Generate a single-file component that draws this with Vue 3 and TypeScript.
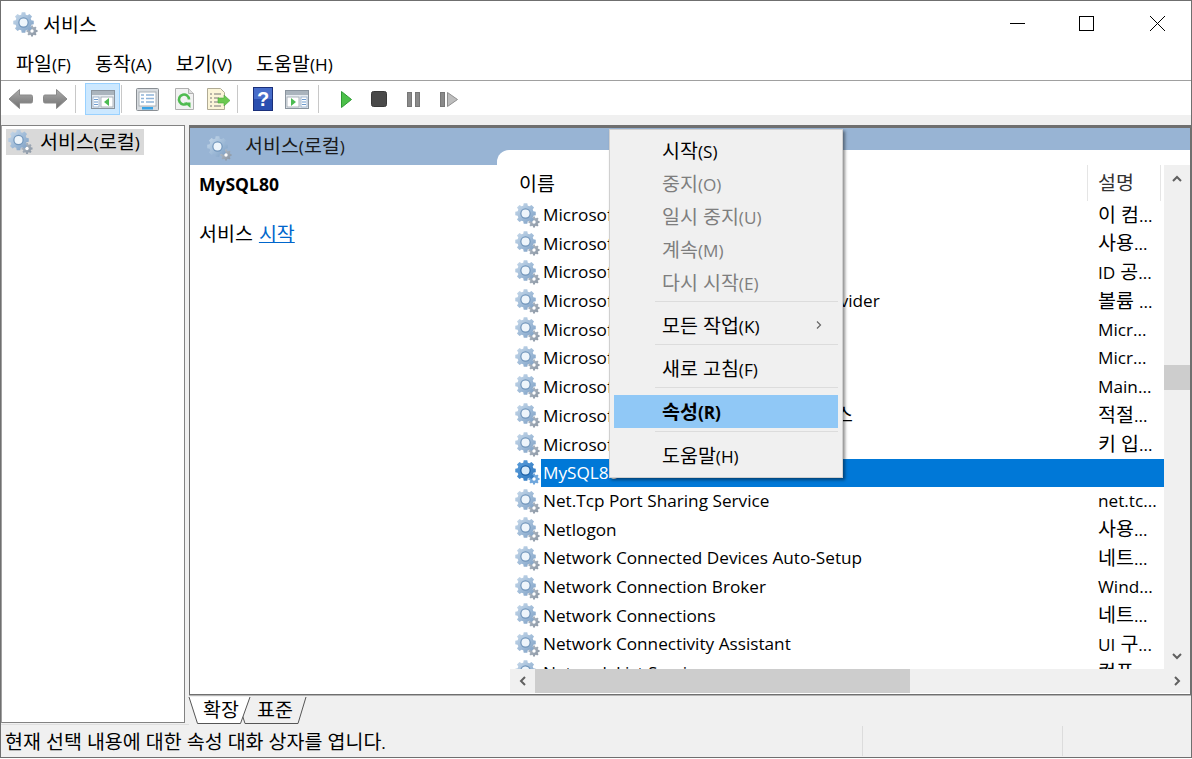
<script setup lang="ts">
import { h } from 'vue'

function gear(cx: number, cy: number, ro: number, ri: number, teeth: number): string {
  const pts: string[] = []
  const step = (Math.PI * 2) / teeth
  for (let i = 0; i < teeth; i++) {
    const a = i * step - Math.PI / 2
    const list: [number, number][] = [
      [ri, a - step * 0.36],
      [ro, a - step * 0.22],
      [ro, a + step * 0.22],
      [ri, a + step * 0.36],
    ]
    for (const [r, t] of list) {
      pts.push(`${(cx + r * Math.cos(t)).toFixed(2)} ${(cy + r * Math.sin(t)).toFixed(2)}`)
    }
  }
  return 'M' + pts.join('L') + 'Z'
}

const bigGear = gear(10.5, 10.5, 10.4, 8.2, 8)
const smallGear = gear(19, 19, 5.6, 4.2, 8)

// Hangul runs are set slightly larger than Latin runs, as the original UI font does.
const T = (props: { t: string }) =>
  h(
    'span',
    props.t
      .split(/([\uAC00-\uD7A3 ]+)/)
      .filter((s) => s.length > 0)
      .map((s) => (/[\uAC00-\uD7A3]/.test(s) ? h('span', { class: 'k' }, s) : s)),
  )
T.props = ['t']

interface Row {
  name: string
  desc: string
  selected?: boolean
}

const rows: Row[] = [
  { name: 'Microsoft Account Sign-in Assistant', desc: '이 컴...' },
  { name: 'Microsoft App-V Client', desc: '사용...' },
  { name: 'Microsoft Defender Antivirus', desc: 'ID 공...' },
  { name: 'Microsoft Software Shadow Copy Provider', desc: '볼륨 ...' },
  { name: 'Microsoft Storage Spaces', desc: 'Micr...' },
  { name: 'Microsoft Store Install', desc: 'Micr...' },
  { name: 'Microsoft Update Health', desc: 'Main...' },
  { name: 'Microsoft Windows SMS 라우터 서비스', desc: '적절...' },
  { name: 'Microsoft 키 입력', desc: '키 입...' },
  { name: 'MySQL80', desc: '', selected: true },
  { name: 'Net.Tcp Port Sharing Service', desc: 'net.tc...' },
  { name: 'Netlogon', desc: '사용...' },
  { name: 'Network Connected Devices Auto-Setup', desc: '네트...' },
  { name: 'Network Connection Broker', desc: 'Wind...' },
  { name: 'Network Connections', desc: '네트...' },
  { name: 'Network Connectivity Assistant', desc: 'UI 구...' },
  { name: 'Network List Service', desc: '컴퓨...' },
]

const menus = ['파일(F)', '동작(A)', '보기(V)', '도움말(H)']
</script>

<template>
  <div class="window">
    <svg class="defs" width="0" height="0" aria-hidden="true">
      <defs>
        <linearGradient id="gearBlue" x1="0" y1="0" x2="1" y2="1">
          <stop offset="0" stop-color="#cbdcec" />
          <stop offset="0.6" stop-color="#9ab7d5" />
          <stop offset="1" stop-color="#7b9cc0" />
        </linearGradient>
        <linearGradient id="gearSel" x1="0" y1="0" x2="1" y2="1">
          <stop offset="0" stop-color="#5c9fdc" />
          <stop offset="1" stop-color="#2a74bd" />
        </linearGradient>
        <linearGradient id="gearGrey" x1="0" y1="0" x2="1" y2="1">
          <stop offset="0" stop-color="#b4bec9" />
          <stop offset="1" stop-color="#8692a0" />
        </linearGradient>
        <linearGradient id="arrowG" x1="0" y1="0" x2="0" y2="1">
          <stop offset="0" stop-color="#adadad" />
          <stop offset="1" stop-color="#6f6f6f" />
        </linearGradient>
        <symbol id="gear" viewBox="0 0 25 25">
          <path :d="smallGear" fill="url(#gearGrey)" />
          <circle cx="19" cy="19" r="1.700" fill="#fff" />
          <path :d="bigGear" fill="url(#gearBlue)" />
          <circle cx="10.500" cy="10.500" r="5.200" fill="#7397bc" />
          <circle cx="10.500" cy="10.500" r="4" fill="#eef5fb" />
        </symbol>
        <symbol id="gearS" viewBox="0 0 25 25">
          <path :d="smallGear" fill="#6ea6dc" />
          <circle cx="19" cy="19" r="1.700" fill="#fff" />
          <path :d="bigGear" fill="url(#gearSel)" />
          <circle cx="10.500" cy="10.500" r="5.200" fill="#1a60a8" />
          <circle cx="10.500" cy="10.500" r="4" fill="#d6e9f9" />
        </symbol>
      </defs>
    </svg>

    <header class="titlebar">
      <svg class="title-icon"><use href="#gear" /></svg>
      <span class="title-text"><T t="서비스" /></span>
      <div class="caption">
        <svg width="46" height="46" viewBox="0 0 46 46"><path d="M17 22.500h15" stroke="#000" fill="none" /></svg>
        <svg width="46" height="46" viewBox="0 0 46 46"><rect x="15.500" y="15.500" width="14" height="14" stroke="#000" fill="none" /></svg>
        <svg width="46" height="46" viewBox="0 0 46 46"><path d="M15 15l15 15M30 15 15 30" stroke="#000" fill="none" /></svg>
      </div>
    </header>

    <nav class="menubar">
      <span v-for="m in menus" :key="m" class="menu-item"><T :t="m" /></span>
    </nav>

    <div class="toolbar">
      <svg class="tb w25" viewBox="0 0 25 24"><path d="M1 12 11.500 2.500v5.500h11.500a1.500 1.500 0 0 1 1.500 1.500v5a1.500 1.500 0 0 1-1.500 1.500H11.500v5.500z" fill="url(#arrowG)" stroke="#8a8a8a" /></svg>
      <svg class="tb w25 ml10" viewBox="0 0 25 24"><path d="M24 12 13.500 2.500v5.500H2a1.500 1.500 0 0 0-1.500 1.500v5A1.500 1.500 0 0 0 2 16h11.500v5.500z" fill="url(#arrowG)" stroke="#8a8a8a" /></svg>
      <i class="sep s1"></i>
      <div class="active">
        <svg width="24" height="19" viewBox="0 0 24 19"><rect x=".5" y=".5" width="23" height="18" fill="#e6ebf0" stroke="#8a949e" /><rect x="1" y="1" width="22" height="4" fill="#aab4bd" /><rect x="2" y="7" width="6" height="10" fill="#fff" stroke="#8fa9c6" stroke-width=".8" /><path d="M3 9.500h4M3 12h4M3 14.500h4" stroke="#6d9bcf" /><rect x="10" y="7" width="12" height="10" fill="#fff" stroke="#9aa4ad" stroke-width=".8" /><path d="M18 8v8l-5-4z" fill="#4cbb52" /></svg>
      </div>
      <i class="sep s2"></i>
      <svg class="tb ic1" width="23" height="23" viewBox="0 0 23 23"><rect x=".5" y=".5" width="22" height="22" rx="1" fill="#d8dce0" stroke="#8a8f94" /><rect x="3" y="4" width="17" height="14" fill="#fff" stroke="#a8afb6" /><path d="M5 7h3M10 7h8M5 10.500h3M10 10.500h8M5 14h3M10 14h8" stroke="#8fb4d9" stroke-width="1.400" /><rect x="6" y="19" width="11" height="2.500" fill="#39a4e8" /></svg>
      <svg class="tb ic2" width="21" height="24" viewBox="0 0 21 24"><path d="M1.500 1.500h13l5 5v16h-18z" fill="#f2f2f2" stroke="#b0b0b0" /><path d="M14.500 1.500v5h5" fill="#dedede" stroke="#b0b0b0" /><path d="M15 12.500a5 5 0 1 0-1.600 3.700" fill="none" stroke="#4fbb50" stroke-width="2.600" /><path d="M10 15.500h6.500V21z" fill="#4fbb50" /></svg>
      <svg class="tb ic3" width="25" height="24" viewBox="0 0 25 24"><path d="M1.500 1.500h13l4 4v17h-17z" fill="#fbf5d8" stroke="#b0ab95" /><path d="M4 7h2M8 7h7M4 11h2M8 11h5M4 15h2M8 15h5M4 19h2M8 19h7" stroke="#777" /><path d="M12 11h6V8l6 5.500L18 19v-3h-6z" fill="#6cc950" stroke="#49a83e" stroke-width=".6" /></svg>
      <i class="sep s3"></i>
      <svg class="tb ic4" width="20" height="24" viewBox="0 0 20 24"><rect x=".5" y=".5" width="19" height="23" fill="#2a4fb0" stroke="#1a2f7a" /><rect x="1" y="1" width="18" height="11" fill="#5b82dc" opacity=".6" /><text x="10" y="19" text-anchor="middle" class="q">?</text></svg>
      <svg class="tb ic5" width="24" height="19" viewBox="0 0 24 19"><rect x=".5" y=".5" width="23" height="18" fill="#e6ebf0" stroke="#8a949e" /><rect x="1" y="1" width="22" height="4" fill="#aab4bd" /><rect x="2" y="7" width="12" height="10" fill="#fff" stroke="#9aa4ad" stroke-width=".8" /><path d="M6 8v8l5-4z" fill="#4cbb52" /><rect x="16" y="7" width="6" height="10" fill="#fff" stroke="#8fa9c6" stroke-width=".8" /><path d="M17 9.500h4M17 12h4M17 14.500h4" stroke="#6d9bcf" /></svg>
      <i class="sep s4"></i>
      <svg class="tb ic6" width="11" height="17" viewBox="0 0 11 17"><path d="M.5.500 10.500 8.500.5 16.500z" fill="#4cc04a" stroke="#2f9a34" /></svg>
      <svg class="tb ic7" width="16" height="16" viewBox="0 0 16 16"><rect x=".5" y=".5" width="15" height="15" rx="2" fill="#4a4a4a" stroke="#3a3a3a" /></svg>
      <svg class="tb ic8" width="13" height="15" viewBox="0 0 13 15"><rect x=".5" y=".5" width="4" height="14" fill="#8a8a8a" stroke="#777" /><rect x="8.500" y=".5" width="4" height="14" fill="#8a8a8a" stroke="#777" /></svg>
      <svg class="tb ic9" width="18" height="15" viewBox="0 0 18 15"><rect x=".5" y=".5" width="4" height="14" fill="#8a8a8a" stroke="#777" /><path d="M7.500.5l10 7-10 7z" fill="#bdbdbd" stroke="#8f8f8f" /></svg>
    </div>

    <main class="workspace">
      <aside class="tree">
        <div class="tree-node">
          <svg class="tree-icon"><use href="#gear" /></svg>
          <span class="tree-label"><T t="서비스(로컬)" /></span>
        </div>
      </aside>

      <section class="content">
        <div class="details">
          <div class="left-col">
            <div class="head">
              <svg class="head-icon"><use href="#gear" /></svg>
              <span class="head-text"><T t="서비스(로컬)" /></span>
            </div>
            <div class="desc">
              <b class="svc-name">MySQL80</b>
              <p class="svc-line"><T t="서비스 " /><a class="link"><T t="시작" /></a></p>
            </div>
          </div>

          <div class="right-col">
            <div class="list-frame">
              <div class="list-top">
                <div class="list">
                  <div class="col-head">
                    <span class="col-name"><T t="이름" /></span>
                    <span class="col-desc"><T t="설명" /></span>
                  </div>
                  <div class="rows">
                    <div v-for="r in rows" :key="r.name" class="row" :class="{ sel: r.selected }">
                      <svg class="row-icon"><use :href="r.selected ? '#gearS' : '#gear'" /></svg>
                      <div class="row-body">
                        <span class="row-name"><T :t="r.name" /></span>
                        <span class="row-desc"><T :t="r.desc" /></span>
                      </div>
                    </div>
                  </div>
                </div>
                <div class="vscroll">
                  <svg width="26" height="26" viewBox="0 0 26 26"><path d="M9 16l4-4 4 4" fill="none" stroke="#606060" stroke-width="2" /></svg>
                  <div class="vtrack"><div class="vthumb"></div></div>
                  <svg width="26" height="26" viewBox="0 0 26 26"><path d="M9 11l4 4 4-4" fill="none" stroke="#606060" stroke-width="2" /></svg>
                </div>
              </div>
              <div class="hscroll">
                <svg width="25" height="24" viewBox="0 0 25 24"><path d="M15 8l-4 4 4 4" fill="none" stroke="#606060" stroke-width="2" /></svg>
                <div class="hthumb"></div>
                <div class="hrest"></div>
                <svg width="26" height="24" viewBox="0 0 26 24"><path d="M11 8l4 4-4 4" fill="none" stroke="#606060" stroke-width="2" /></svg>
              </div>
            </div>
          </div>
        </div>

        <div class="tabs">
          <svg class="tab-shape" width="120" height="28" viewBox="0 0 120 28">
            <path d="M58 26.500h53L119 0M58 26.500 54 14" fill="none" stroke="#555" />
            <path d="M2 0l8.500 26.500h43L63 0z" fill="#fff" />
            <path d="M2 0l8.500 26.500h43L63 0" fill="none" stroke="#555" />
          </svg>
          <span class="tab t1"><T t="확장" /></span>
          <span class="tab t2"><T t="표준" /></span>
        </div>
      </section>
    </main>

    <footer class="status">
      <span class="status-main"><T t="현재 선택 내용에 대한 속성 대화 상자를 엽니다." /></span>
      <span class="status-cell c1"></span>
      <span class="status-cell c2"></span>
    </footer>

    <div class="ctx">
      <div class="ctx-item"><T t="시작(S)" /></div>
      <div class="ctx-item off"><T t="중지(O)" /></div>
      <div class="ctx-item off"><T t="일시 중지(U)" /></div>
      <div class="ctx-item off"><T t="계속(M)" /></div>
      <div class="ctx-item off"><T t="다시 시작(E)" /></div>
      <hr class="ctx-sep" />
      <div class="ctx-item">
        <T t="모든 작업(K)" />
        <svg class="chev" width="8" height="10" viewBox="0 0 8 10"><path d="M2 1.500 5.500 5 2 8.500" fill="none" stroke="#666" stroke-width="1.200" /></svg>
      </div>
      <hr class="ctx-sep" />
      <div class="ctx-item"><T t="새로 고침(F)" /></div>
      <hr class="ctx-sep" />
      <div class="ctx-item hot"><T t="속성(R)" /></div>
      <hr class="ctx-sep" />
      <div class="ctx-item"><T t="도움말(H)" /></div>
    </div>
  </div>
</template>

<style>
html, body { margin: 0; padding: 0; overflow: hidden; }
.k { font-size: 19.5px; }
</style>

<style scoped>
.window {
  position: relative;
  box-sizing: border-box;
  width: 1192px;
  height: 758px;
  display: flex;
  flex-direction: column;
  background: #f0f0f0;
  border: 1px solid #6f6f6f;
  font-family: "Open Sans", "Noto Sans CJK KR", sans-serif;
  font-size: 17.2px;
  color: #000;
  overflow: hidden;
}
.defs { position: absolute; }
.titlebar {
  flex: none;
  height: 46px;
  display: flex;
  align-items: center;
  background: #fff;
  padding-left: 12px;
}
.title-icon { width: 25px; height: 25px; margin-right: 5px; }
.title-text { line-height: 24px; margin-top: 3px; }
.caption { margin-left: auto; display: flex; gap: 25px; margin-right: 10px; }
.menubar {
  flex: none;
  height: 33px;
  display: flex;
  align-items: center;
  background: #fff;
  border-bottom: 1px solid #a0a0a0;
  padding-left: 15px;
  gap: 24px;
}
.menu-item { line-height: 24px; margin-top: 2px; }
.toolbar {
  flex: none;
  height: 32px;
  padding-top: 2px;
  display: flex;
  align-items: center;
  background: #fff;
  padding-left: 7px;
}
.tb { flex: none; }
.w25 { width: 25px; height: 24px; }
.ml10 { margin-left: 10px; }
.sep { flex: none; width: 1px; height: 28px; background: #c8c8c8; }
.s1 { margin-left: 7px; }
.active {
  flex: none;
  box-sizing: border-box;
  margin-left: 9px;
  width: 35px;
  height: 32px;
  background: #cce8ff;
  border: 1px solid #99d1ff;
  display: flex;
  align-items: center;
  justify-content: center;
}
.s2 { margin-left: 1px; }
.ic1 { margin-left: 14px; }
.ic2 { margin-left: 15px; }
.ic3 { margin-left: 11px; }
.s3 { margin-left: 6px; }
.ic4 { margin-left: 15px; }
.ic5 { margin-left: 12px; }
.s4 { margin-left: 9px; }
.ic6 { margin-left: 22px; }
.ic7 { margin-left: 19px; }
.ic8 { margin-left: 20px; }
.ic9 { margin-left: 20px; }
.q { font: bold 20px "Liberation Sans", sans-serif; fill: #fff; }
.workspace {
  flex: 1;
  min-height: 0;
  display: flex;
  gap: 4px;
  padding-top: 10px;
}
.tree {
  box-sizing: border-box;
  width: 184px;
  height: 598px;
  flex: none;
  background: #fff;
  border: 1px solid #828282;
  border-left-color: #a0a0a0;
  padding: 3px 0 0 4px;
}
.tree-node { display: flex; align-items: center; height: 26px; }
.tree-icon { width: 25px; height: 26px; background: #d9d9d9; flex: none; padding-left: 2px; box-sizing: content-box; }
.tree-label { background: #d9d9d9; height: 26px; line-height: 26px; padding: 0 4px 0 7px; white-space: nowrap; }
.content { flex: 1; min-width: 0; display: flex; flex-direction: column; }
.details {
  flex: none;
  box-sizing: border-box;
  height: 570px;
  display: flex;
  background: #fff;
  border: 1px solid #6f6f6f;
  border-top-width: 3px;
}
.left-col { flex: none; width: 307px; display: flex; flex-direction: column; background: #fff; }
.head {
  height: 37px;
  flex: none;
  background: #98b4d4;
  display: flex;
  align-items: center;
  padding-left: 17px;
  color: #1a1a1a;
}
.head-icon { width: 25px; height: 25px; margin-right: 13px; margin-top: 4px; }
.head-text { line-height: 24px; }
.desc { padding: 6px 0 0 9px; }
.svc-name { display: block; font-size: 17.5px; font-weight: 700; line-height: 26px; }
.svc-line { margin: 23px 0 0; line-height: 28px; }
.link { color: #0066cc; text-decoration: underline; margin-left: 1px; }
.right-col {
  flex: 1;
  min-width: 0;
  background: linear-gradient(#98b4d4 37px, #fff 37px);
  padding-top: 22px;
  display: flex;
}
.list-frame {
  flex: 1;
  min-width: 0;
  background: #fff;
  border-top-left-radius: 12px;
  padding: 0 0 1px 13px;
  display: flex;
  flex-direction: column;
}
.list-top { flex: 1; min-height: 0; display: flex; margin-top: 15px; }
.list { flex: 1; min-width: 0; overflow: hidden; display: flex; flex-direction: column; padding-left: 5px; }
.col-head { flex: none; height: 36px; display: flex; align-items: center; position: relative; }
.col-name { padding-left: 4px; line-height: 24px; margin-top: 2px; }
.col-desc {
  position: absolute;
  left: 572px;
  width: 74px;
  height: 36px;
  line-height: 36px;
  padding-left: 10px;
  box-sizing: border-box;
  border-left: 1px solid #e5e5e5;
  border-right: 1px solid #e5e5e5;
  color: #333;
}
.rows { flex: 1; min-height: 0; overflow: hidden; }
.row { height: 28.6px; display: flex; align-items: center; white-space: nowrap; }
.row-icon { width: 25px; height: 25px; flex: none; margin-right: 1px; }
.row-body { flex: 1; min-width: 0; display: flex; height: 28px; line-height: 28px; align-items: center; padding-left: 2px; }
.sel .row-body { background: #0078d7; color: #fff; }
.row-name { width: 555px; flex: none; overflow: hidden; }
.vscroll {
  flex: none;
  width: 26px;
  background: #f0f0f0;
  display: flex;
  flex-direction: column;
}
.vscroll svg { flex: none; }
.vtrack { flex: 1; position: relative; }
.vthumb { position: absolute; left: 0; right: 0; top: 174px; height: 25px; background: #cdcdcd; }
.hscroll { flex: none; height: 24px; display: flex; align-items: stretch; background: #f0f0f0; }
.hscroll svg { flex: none; }
.hthumb { flex: none; width: 375px; background: #cdcdcd; }
.hrest { flex: 1; }
.tabs { position: relative; height: 29px; border-top: 1px solid #b4b4b4; flex: none; background: #f0f0f0; }
.tab-shape { position: absolute; left: -2px; top: 1px; overflow: visible; width: 120px; height: 28px; }
.tab { position: absolute; top: 1px; line-height: 26px; }
.t1 { left: 14px; }
.t2 { left: 68px; }
.status {
  flex: none;
  height: 32px;
  display: flex;
  align-items: center;
  border-top: 1px solid #dedede;
  background: #f0f0f0;
  padding-left: 4px;
}
.status-main { flex: 1; line-height: 24px; margin-top: 2px; }
.status-cell { height: 30px; border-left: 1px solid #dcdcdc; }
.c1 { width: 199px; }
.c2 { width: 128px; }
.ctx {
  position: absolute;
  left: 608px;
  top: 128px;
  width: 234px;
  box-sizing: border-box;
  height: 349px;
  background: #f0f0f0;
  border: 1px solid #d0d0d0;
  box-shadow: 2px 2px 3px rgba(0, 0, 0, .45);
  padding: 4px 4px 0;
}
.ctx-item {
  position: relative;
  height: 33px;
  line-height: 33px;
  padding-left: 48px;
  white-space: nowrap;
}
.off { color: #7e7e7e; }
.hot { background: #90c8f6; font-weight: 700; }
.ctx-sep { margin: 2px 0 7px 41px; height: 1px; border: 0; background: #dcdcdc; }
.hot + .ctx-sep { margin-top: 3px; }
.chev { position: absolute; right: 15px; top: 11px; }
</style>
